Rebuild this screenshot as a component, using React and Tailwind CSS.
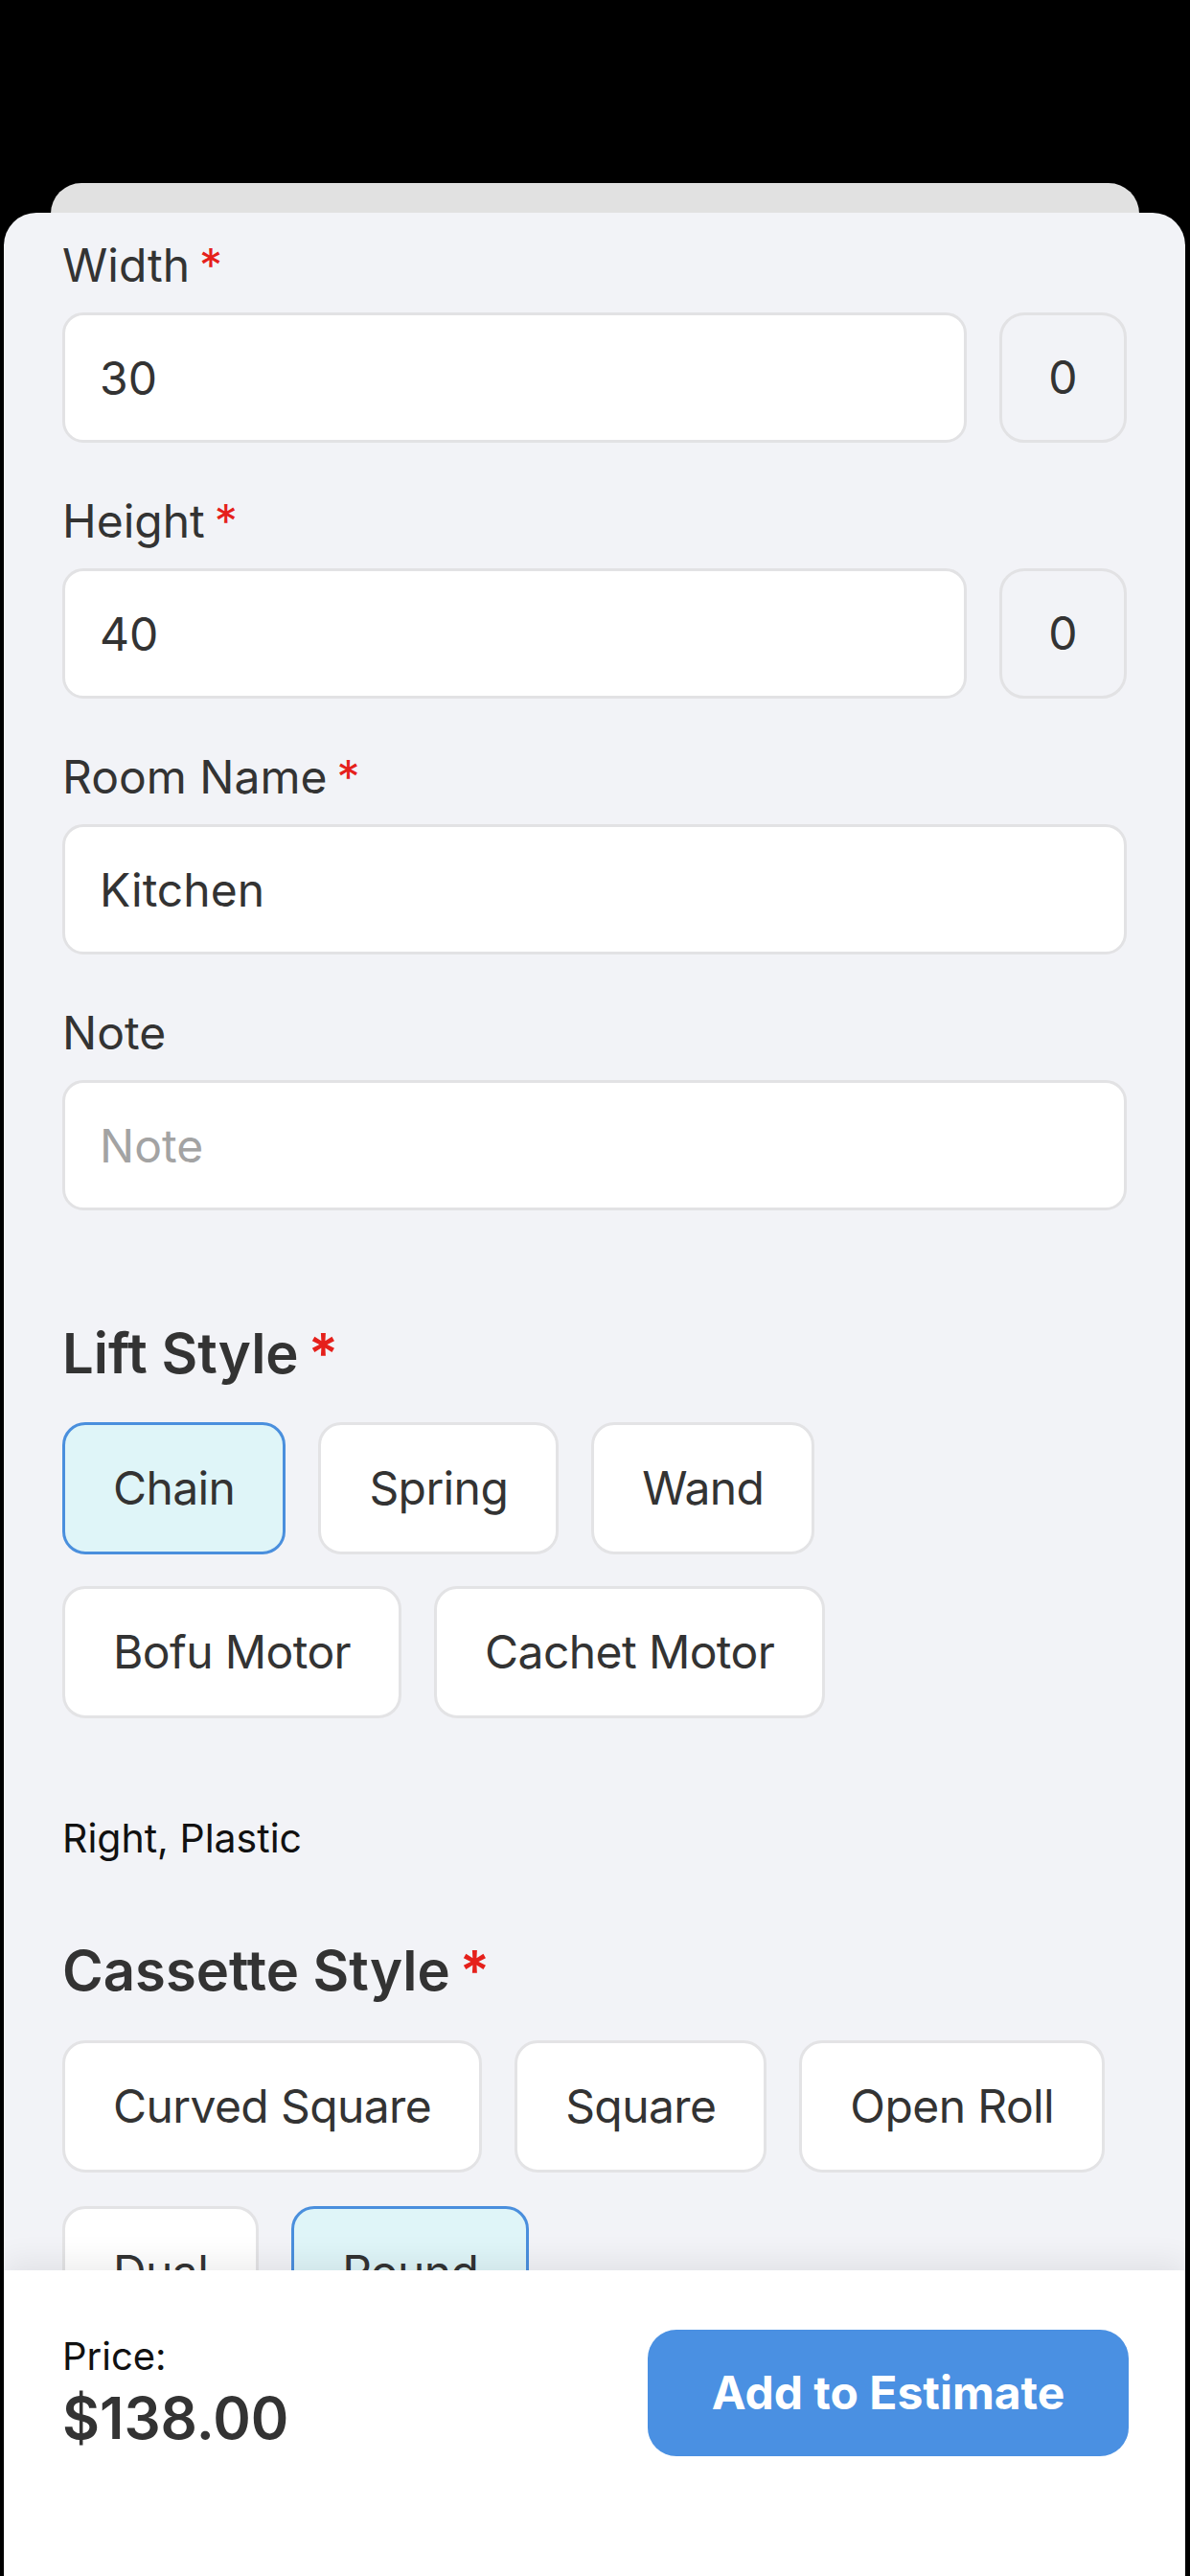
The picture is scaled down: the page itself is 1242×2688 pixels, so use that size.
import React, { useState } from 'react';

const Required = () => <span className="text-[#e5201b] ml-[10px]">*</span>;

const Field = ({ label, required, value, placeholder, extra }) => (
  <div className="flex flex-col gap-[20px]">
    <label className="text-[48px] leading-[58px] text-[#333]">
      {label}
      {required && <Required />}
    </label>
    <div className="flex gap-[34px]">
      <input
        defaultValue={value}
        placeholder={placeholder}
        className="flex-1 min-w-0 h-[136px] rounded-[22px] border-[3px] border-[#e2e2e4] bg-white px-[36px] text-[48px] text-[#333] placeholder:text-[#a3a3a3] outline-none"
      />
      {extra !== undefined && (
        <div className="w-[133px] h-[136px] rounded-[26px] border-[3px] border-[#e2e2e4] flex items-center justify-center text-[48px] text-[#333]">
          {extra}
        </div>
      )}
    </div>
  </div>
);

const Chip = ({ label, active, onClick }) => (
  <button
    onClick={onClick}
    className={`h-[138px] px-[50px] rounded-[24px] text-[48px] tracking-[-0.6px] text-[#333] ${
      active ? 'bg-[#dff5f8] border-[3px] border-[#4a8fdd]' : 'bg-white border-[3px] border-[#e3e3e5]'
    }`}
  >
    {label}
  </button>
);

const App = () => {
  const [lift, setLift] = useState('Chain');
  const [cassette, setCassette] = useState('Round');

  const lifts = ['Chain', 'Spring', 'Wand', 'Bofu Motor', 'Cachet Motor'];
  const cassettes = ['Curved Square', 'Square', 'Open Roll', 'Dual', 'Round'];

  return (
    <div className="w-[1242px] h-[2688px] bg-black font-['Inter',sans-serif] flex flex-col overflow-hidden">
      {/* stacked card behind */}
      <div className="h-[191px] shrink-0" />
      <div className="mx-[53px] h-[40px] shrink-0 rounded-t-[32px] bg-[#e1e1e1]" />

      {/* sheet */}
      <div className="ml-[4px] mr-[5px] -mt-[9px] flex-1 min-h-0 flex flex-col rounded-t-[34px] bg-[#f2f3f7] overflow-hidden">
        <div className="flex-1 min-h-0 overflow-hidden pl-[61px] pr-[61px] pt-[26px]">
          <div className="flex flex-col gap-[53px]">
            <Field label="Width" required value="30" extra="0" />
            <Field label="Height" required value="40" extra="0" />
            <Field label="Room Name" required value="Kitchen" />
            <Field label="Note" placeholder="Note" />
          </div>

          <h2 className="mt-[114px] text-[58px] leading-[70px] font-semibold text-[#333]">
            Lift Style
            <Required />
          </h2>
          <div className="mt-[37px] flex flex-wrap gap-x-[34px] gap-y-[33px]">
            {lifts.map((l) => (
              <Chip key={l} label={l} active={lift === l} onClick={() => setLift(l)} />
            ))}
          </div>

          <p className="mt-[100px] text-[41px] leading-[50px] text-[#111]">Right, Plastic</p>

          <h2 className="mt-[78px] text-[58px] leading-[70px] font-semibold text-[#333]">
            Cassette Style
            <Required />
          </h2>
          <div className="mt-[38px] flex flex-wrap gap-x-[34px] gap-y-[35px]">
            {cassettes.map((c) => (
              <Chip key={c} label={c} active={cassette === c} onClick={() => setCassette(c)} />
            ))}
          </div>
        </div>

        {/* footer */}
        <div className="relative z-10 h-[319px] shrink-0 bg-white shadow-[0_-10px_30px_rgba(0,0,0,0.07)] pl-[61px] pr-[59px] pt-[62px]">
          <div className="flex items-center justify-between">
            <div className="flex flex-col gap-[4px]">
              <span className="text-[40px] leading-[48px] text-[#111]">Price:</span>
              <span className="text-[60px] leading-[72px] font-semibold text-[#333]">$138.00</span>
            </div>
            <button className="w-[502px] h-[132px] rounded-[30px] bg-[#4a90e2] text-white text-[48px] font-bold">
              Add to Estimate
            </button>
          </div>
        </div>
      </div>
    </div>
  );
};

export default App;
